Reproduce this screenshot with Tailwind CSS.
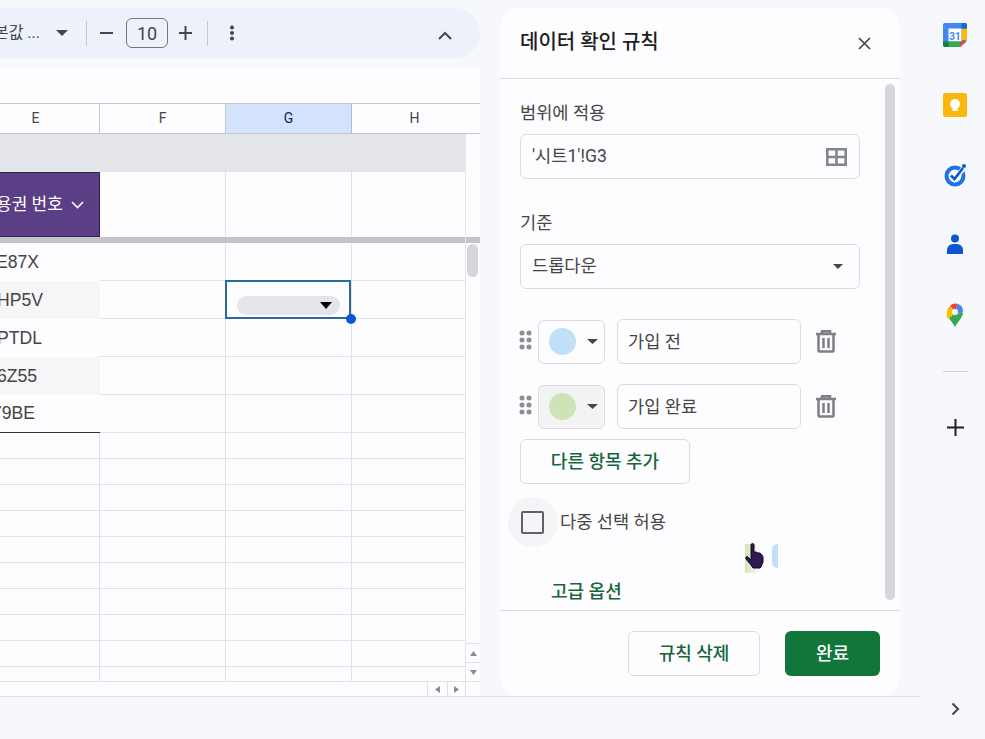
<!DOCTYPE html>
<html lang="ko">
<head>
    <meta charset="UTF-8">
    <title>데이터 확인 규칙</title>
    <script src="https://cdn.jsdelivr.net/npm/@tailwindcss/browser@4"></script>
</head>
<body class="bg-[#f6f8fc] overflow-hidden font-['Roboto','Noto_Sans_CJK_KR',sans-serif] text-[#444746]">
<div class="relative w-[985px] h-[739px] overflow-hidden">
    <div class="flex h-[696px]">

        <!-- sheet side -->
        <div class="w-[480px] shrink-0 pt-2 flex flex-col">
            <div class="h-[50px] bg-[#edf2fa] rounded-r-[25px] flex items-center text-[#444746] overflow-hidden">
                <span class="w-[48px] -ml-[8px] shrink-0 text-right text-[16px] whitespace-nowrap overflow-hidden">본값 ...</span>
                <svg class="ml-[16px] w-3 h-2" viewBox="0 0 12 8"><path d="M0 1h12L6 7z" fill="#444746"/></svg>
                <div class="ml-[18px] w-px h-[25px] bg-[#c7c7c7]"></div>
                <svg class="ml-[13px] w-[13px] h-[14px]" viewBox="0 0 13 14"><path d="M0 7h13" stroke="#444746" stroke-width="2"/></svg>
                <div class="ml-[13px] w-[42px] h-[30px] border border-[#747775] rounded-md flex items-center justify-center text-[18px]">10</div>
                <svg class="ml-[11px] w-[13px] h-[14px]" viewBox="0 0 13 14"><path d="M0 7h13M6.500 0v14" stroke="#444746" stroke-width="2"/></svg>
                <div class="ml-[15px] w-px h-[25px] bg-[#c7c7c7]"></div>
                <svg class="ml-[21px] w-[6px] h-[16px]" viewBox="0 0 6 16"><circle cx="3" cy="2.500" r="2" fill="#444746"/><circle cx="3" cy="8" r="2" fill="#444746"/><circle cx="3" cy="13.500" r="2" fill="#444746"/></svg>
                <svg class="ml-[203px] mt-[4px] w-[14px] h-[9px]" viewBox="0 0 14 9"><path d="M1 8l6-6 6 6" fill="none" stroke="#444746" stroke-width="2"/></svg>
            </div>
            <div class="mt-[10px] h-[35px] bg-[#fdfcff] shrink-0"></div>

            <div id="sheet" class="relative h-[593px] bg-[#fdfcff] overflow-hidden">
                <!-- column headers -->
                <div class="flex h-[31px] border-y border-[#c4c7c9] text-[14px] text-[#444746]">
                    <div class="w-[100px] border-r border-[#c4c7c9] flex items-center justify-center pr-[28px]">E</div>
                    <div class="w-[126px] border-r border-[#c4c7c9] flex items-center justify-center">F</div>
                    <div class="w-[126px] border-r border-[#b5bac2] bg-[#d3e3fd] text-[#0b2a55] flex items-center justify-center">G</div>
                    <div class="w-[113px] pl-[12px] flex items-center justify-center">H</div>
                </div>
                <div class="w-[465px] h-[38px] bg-[#e3e5e9]"></div>
                <!-- frozen header row -->
                <div class="flex h-[65px] w-[465px]">
                    <div class="w-[100px] bg-[#5b3f86] border-y border-r border-[#2f2347] text-white text-[17px] flex items-center whitespace-nowrap overflow-hidden">
                        <span class="-ml-[4px] mt-[1px]">용권 번호</span>
                        <svg class="ml-[8px] mt-[1px] w-[13px] h-[8px]" viewBox="0 0 13 8"><path d="M1 1l5.500 5.500L12 1" fill="none" stroke="#fff" stroke-width="1.600"/></svg>
                    </div>
                    <div class="w-[126px] border-r border-[#e1e1e5]"></div>
                    <div class="w-[126px] border-r border-[#e1e1e5]"></div>
                </div>
                <div class="w-[480px] h-[6px] bg-[#c5c4c8]"></div>
                <div id="rows" class="w-[465px]"></div>

                <!-- selected cell -->
                <div class="absolute left-[225px] top-[177px] w-[126px] h-[39px] border-2 border-[#2b6a9c]">
                    <div class="absolute left-[10px] top-[14px] w-[103px] h-[19px] rounded-full bg-[#e3e5e9] flex items-center justify-end pr-[8px]">
                        <svg class="w-[12px] h-[7px]" viewBox="0 0 12 7"><path d="M0 0h12L6 7z" fill="#000"/></svg>
                    </div>
                    <div class="absolute -right-[7px] -bottom-[7px] w-[10px] h-[10px] rounded-full bg-[#0b57d0]"></div>
                </div>

                <!-- scrollbars -->
                <div class="absolute left-[465px] top-[31px] bottom-[14px] w-[15px] border-l border-[#e6e6ea]">
                    <div class="absolute left-[1px] top-[110px] w-[11px] h-[33px] rounded-md bg-[#d5d6de]"></div>
                    <div class="absolute left-0 bottom-[20px] w-[14px] h-[19px] border-t border-[#e1e1e5] flex items-center justify-center">
                        <svg class="w-[7px] h-[5px]" viewBox="0 0 7 5"><path d="M0 5h7L3.500 0z" fill="#8b8b8f"/></svg>
                    </div>
                    <div class="absolute left-0 bottom-0 w-[14px] h-[20px] border-t border-[#e1e1e5] flex items-center justify-center">
                        <svg class="w-[7px] h-[5px]" viewBox="0 0 7 5"><path d="M0 0h7L3.500 5z" fill="#8b8b8f"/></svg>
                    </div>
                </div>
                <div class="absolute left-0 bottom-0 w-[480px] h-[15px] bg-[#fdfcff] border-t border-[#e1e1e5] flex">
                    <div class="ml-[427px] w-[20px] border-l border-[#e1e1e5] flex items-center justify-center">
                        <svg class="w-[5px] h-[7px]" viewBox="0 0 5 7"><path d="M5 0v7L0 3.500z" fill="#8b8b8f"/></svg>
                    </div>
                    <div class="w-[19px] border-x border-[#e1e1e5] flex items-center justify-center">
                        <svg class="w-[5px] h-[7px]" viewBox="0 0 5 7"><path d="M0 0v7l5-3.500z" fill="#8b8b8f"/></svg>
                    </div>
                </div>
            </div>
        </div>

        <!-- data validation panel -->
        <div class="ml-5 mt-2 w-[400px] h-[688px] shrink-0 bg-[#fdfcff] rounded-[20px] flex flex-col overflow-hidden">
            <div class="h-[71px] shrink-0 border-b border-[#dcdcdf] pl-[20px] pr-[29px] flex items-center justify-between">
                <h2 class="text-[20px] font-medium text-[#1f1f1f] -mt-[3px]">데이터 확인 규칙</h2>
                <svg class="w-[13px] h-[13px]" viewBox="0 0 13 13"><path d="M1 1l11 11M12 1L1 12" stroke="#444746" stroke-width="1.700"/></svg>
            </div>

            <div class="relative flex-1 overflow-hidden pl-5">
                <div class="absolute left-[385px] top-[5px] w-[10px] h-[516px] rounded-md bg-[#d5d6de]"></div>

                <div class="pt-[22px] text-[17.6px] leading-6">범위에 적용</div>
                <div class="mt-[9px] w-[340px] h-[45px] border border-[#dadce0] rounded-md pl-[11px] pr-[12px] flex items-center justify-between text-[17.6px]">
                    <span>'시트1'!G3</span>
                    <svg class="w-[21px] h-[18px]" viewBox="0 0 21 18"><path d="M1.300 1.300h18.400v15.400H1.300zM1.300 9h18.400M10.500 1.300v15.400" fill="none" stroke="#80868b" stroke-width="2.600"/></svg>
                </div>

                <div class="mt-[32px] text-[17.6px] leading-6">기준</div>
                <div class="mt-[9px] w-[340px] h-[45px] border border-[#dadce0] rounded-md pl-[11px] pr-[16px] flex items-center justify-between text-[17.6px]">
                    <span>드롭다운</span>
                    <svg class="w-[10px] h-[5px]" viewBox="0 0 10 5"><path d="M0 0h10L5 5z" fill="#444746"/></svg>
                </div>

                <div class="mt-[30px] flex items-center h-[45px]">
                    <svg class="-ml-[1px] w-[13px] h-[20px] -mt-[4px]" viewBox="0 0 13 20"><g fill="#8e8e92"><circle cx="3" cy="3" r="2.500"/><circle cx="10" cy="3" r="2.500"/><circle cx="3" cy="10" r="2.500"/><circle cx="10" cy="10" r="2.500"/><circle cx="3" cy="17" r="2.500"/><circle cx="10" cy="17" r="2.500"/></g></svg>
                    <div class="ml-[6px] w-[67px] h-[44px] border border-[#dadce0] rounded-md flex items-center pl-[10px]">
                        <span class="w-[27px] h-[27px] rounded-full bg-[#bfe0f6]"></span>
                        <svg class="ml-[11px] w-[11px] h-[5px]" viewBox="0 0 11 5"><path d="M0 0h11L5.500 5z" fill="#444746"/></svg>
                    </div>
                    <div class="ml-[12px] w-[184px] h-[45px] border border-[#dadce0] rounded-md pl-[10px] pt-[1px] flex items-center text-[17.6px]">가입 전</div>
                    <svg class="ml-[15px] w-[20px] h-[23px]" viewBox="0 0 20 23"><path d="M0 4h20M6 4V1.200h8V4M2.500 4v16.500a1 1 0 0 0 1 1h13a1 1 0 0 0 1-1V4M7.500 8v10M12.500 8v10" fill="none" stroke="#7d7f83" stroke-width="2.500"/></svg>
                </div>
                <div class="mt-[20px] flex items-center h-[45px]">
                    <svg class="-ml-[1px] w-[13px] h-[20px] -mt-[4px]" viewBox="0 0 13 20"><g fill="#8e8e92"><circle cx="3" cy="3" r="2.500"/><circle cx="10" cy="3" r="2.500"/><circle cx="3" cy="10" r="2.500"/><circle cx="10" cy="10" r="2.500"/><circle cx="3" cy="17" r="2.500"/><circle cx="10" cy="17" r="2.500"/></g></svg>
                    <div class="ml-[6px] w-[67px] h-[44px] border border-[#dadce0] bg-[#f3f3f3] rounded-md flex items-center pl-[10px]">
                        <span class="w-[27px] h-[27px] rounded-full bg-[#cfe3b8]"></span>
                        <svg class="ml-[11px] w-[11px] h-[5px]" viewBox="0 0 11 5"><path d="M0 0h11L5.500 5z" fill="#444746"/></svg>
                    </div>
                    <div class="ml-[12px] w-[184px] h-[45px] border border-[#dadce0] rounded-md pl-[10px] pt-[1px] flex items-center text-[17.6px]">가입 완료</div>
                    <svg class="ml-[15px] w-[20px] h-[23px]" viewBox="0 0 20 23"><path d="M0 4h20M6 4V1.200h8V4M2.500 4v16.500a1 1 0 0 0 1 1h13a1 1 0 0 0 1-1V4M7.500 8v10M12.500 8v10" fill="none" stroke="#7d7f83" stroke-width="2.500"/></svg>
                </div>

                <button class="mt-[10px] block w-[170px] h-[45px] border border-[#dadce0] rounded-md text-[18px] font-medium text-[#17663a]">다른 항목 추가</button>

                <div class="mt-[13px] -ml-[12px] flex items-center">
                    <div class="w-[50px] h-[50px] rounded-full bg-[#f5f4f6] flex items-center justify-center">
                        <span class="-ml-[2px] w-[23px] h-[23px] border-2 border-[#5f6368] rounded-[2px]"></span>
                    </div>
                    <span class="ml-[2px] text-[17.6px]">다중 선택 허용</span>
                </div>

                <div class="mt-[33px] ml-[31px] text-[18px] font-medium leading-6 text-[#17663a]">고급 옵션</div>
            </div>

            <div class="h-[86px] shrink-0 border-t border-[#dcdcdf] pt-[20px] pr-5 flex justify-end items-start">
                <button class="w-[132px] h-[45px] border border-[#dadce0] rounded-md text-[18px] font-medium text-[#17663a]">규칙 삭제</button>
                <button class="ml-[25px] w-[95px] h-[45px] rounded-md bg-[#12763a] text-[18px] font-medium text-white">완료</button>
            </div>
        </div>

        <!-- side rail -->
        <div class="w-[85px] shrink-0 pt-[23px] pl-[43px] flex flex-col items-start">
            <svg class="w-[24px] h-[24px]" viewBox="0 0 24 24">
                <path d="M2 0h20a2 2 0 0 1 2 2v15l-7 7H2a2 2 0 0 1-2-2V2a2 2 0 0 1 2-2z" fill="#4285f4"/>
                <rect x="5.500" y="5.500" width="13" height="13" fill="#fff"/>
                <path d="M18.500 5.500H24V17h-5.500z" fill="#fbbc04"/>
                <path d="M5.500 18.500H17V24H5.500z" fill="#34a853"/>
                <path d="M0 18.500h5.500V24H2a2 2 0 0 1-2-2z" fill="#188038"/>
                <path d="M18.500 0H22a2 2 0 0 1 2 2v3.500h-5.500z" fill="#1967d2"/>
                <path d="M17 18.500h7L17 24z" fill="#ea4335"/>
                <text x="12" y="16.500" text-anchor="middle" font-size="10" font-weight="700" font-family="Roboto" fill="#4285f4">31</text>
            </svg>
            <svg class="mt-[46px] w-[24px] h-[24px]" viewBox="0 0 24 24">
                <rect width="24" height="24" rx="2" fill="#fbb70b"/>
                <circle cx="12" cy="11" r="5" fill="#fff"/>
                <rect x="9.500" y="13" width="5" height="5" fill="#fff"/>
            </svg>
            <svg class="mt-[46px] w-[24px] h-[24px]" viewBox="0 0 24 24">
                <circle cx="12" cy="13" r="8.500" fill="none" stroke="#1a73e8" stroke-width="4"/>
                <path d="M8 12.500l3.500 3.500L20 6" fill="none" stroke="#fff" stroke-width="5"/>
                <path d="M8 12.500l3.500 3.500L20 5" fill="none" stroke="#0b57d0" stroke-width="2.600"/>
                <circle cx="21" cy="3" r="2" fill="#0b57d0"/>
            </svg>
            <svg class="mt-[46px] w-[24px] h-[24px]" viewBox="0 0 24 24">
                <circle cx="12" cy="5.500" r="4" fill="#0b57d0"/>
                <path d="M4 21v-4a6 6 0 0 1 6-6h4a6 6 0 0 1 6 6v4z" fill="#0b57d0"/>
            </svg>
            <svg class="mt-[46px] w-[24px] h-[24px]" viewBox="0 0 24 24">
                <path d="M12 24c-2-5-8-9-8-15L12 12z" fill="#34a853"/>
                <path d="M12 24c2-5 8-9 8-15l-8 3z" fill="#34a853"/>
                <path d="M4 9a8 8 0 0 1 3-6l5 5-3 5-4 3a9 9 0 0 1-1-7z" fill="#fbbc04"/>
                <path d="M7 3a8 8 0 0 1 8-2l-3 7z" fill="#ea4335"/>
                <path d="M15 1a8 8 0 0 1 5 8l-8 3 0-4z" fill="#4285f4"/>
                <circle cx="12" cy="9" r="3" fill="#fff"/>
            </svg>
            <div class="mt-[44px] w-[25px] h-px bg-[#d4d6da]"></div>
            <svg class="mt-[47px] ml-[4px] w-[17px] h-[17px]" viewBox="0 0 17 17"><path d="M0 8.500h17M8.500 0v17" stroke="#1f1f1f" stroke-width="2"/></svg>
        </div>
    </div>

    <!-- bottom edge -->
    <div class="flex h-[43px]">
        <div class="w-[920px] border-t border-[#dcdee2]"></div>
        <div class="pl-[31px] pt-[6px]">
            <svg class="w-[9px] h-[14px]" viewBox="0 0 9 14"><path d="M1.500 1.500L7 7l-5.500 5.500" fill="none" stroke="#444746" stroke-width="2"/></svg>
        </div>
    </div>

    <!-- item being dragged, with the pointer over it -->
    <div class="absolute left-[745px] top-[544px] w-[15px] h-[29px] bg-linear-to-r from-[#cfe3b8] to-[#fdfcff]"></div>
    <div class="absolute left-[772px] top-[544px] w-[6px] h-[24px] rounded-l-full bg-[#bfe0f6]"></div>
    <svg class="absolute left-[745px] top-[543px] w-[20px] h-[26px]" viewBox="0 0 20 26">
        <path d="M6 2c0-2 3-2 3 0v7l2 0 2 1 2 0 2 2 1 2v5l-2 5-1 1H8l-2-3-5-6c-1-2 1-3 2-2l3 3z" fill="#2d1a52" stroke="#0c0816" stroke-width="1"/>
    </svg>
</div>

<script>
    // rows under the frozen header: five tall ones, then the empty default-height ones
    const codes = [
        { text: "E87X", shade: "", edge: "", end: "pr-[61px]" },
        { text: "HP5V", shade: "bg-[#f6f5f7]", edge: "", end: "pr-[57px]" },
        { text: "PTDL", shade: "", edge: "", end: "pr-[58px]" },
        { text: "6Z55", shade: "bg-[#f6f5f7]", edge: "", end: "pr-[63px]" },
        { text: "79BE", shade: "", edge: "border-b border-[#333333]", end: "pr-[65px]" }
    ];
    const line = "border-b border-[#e1e1e5]";
    const rows = document.getElementById("rows");
    let html = "";
    codes.forEach(c => {
        // the codes are wider than what is left of column E, so they run off the left edge
        html += `<div class="flex h-[38px]">
            <div class="w-[100px] ${c.edge} ${c.shade} ${c.end} flex items-center justify-end font-['Liberation_Sans'] text-[17.6px] text-[#444444] overflow-hidden whitespace-nowrap">${c.text}</div>
            <div class="w-[126px] border-r ${line}"></div>
            <div class="w-[126px] border-r ${line}"></div>
            <div class="w-[113px] ${line}"></div>
        </div>`;
    });
    for (let i = 0; i < 10; i++) {
        html += `<div class="flex h-[26px] ${line}">
            <div class="w-[100px] border-r border-[#e1e1e5]"></div>
            <div class="w-[126px] border-r border-[#e1e1e5]"></div>
            <div class="w-[126px] border-r border-[#e1e1e5]"></div>
        </div>`;
    }
    rows.innerHTML = html;
</script>
</body>
</html>
